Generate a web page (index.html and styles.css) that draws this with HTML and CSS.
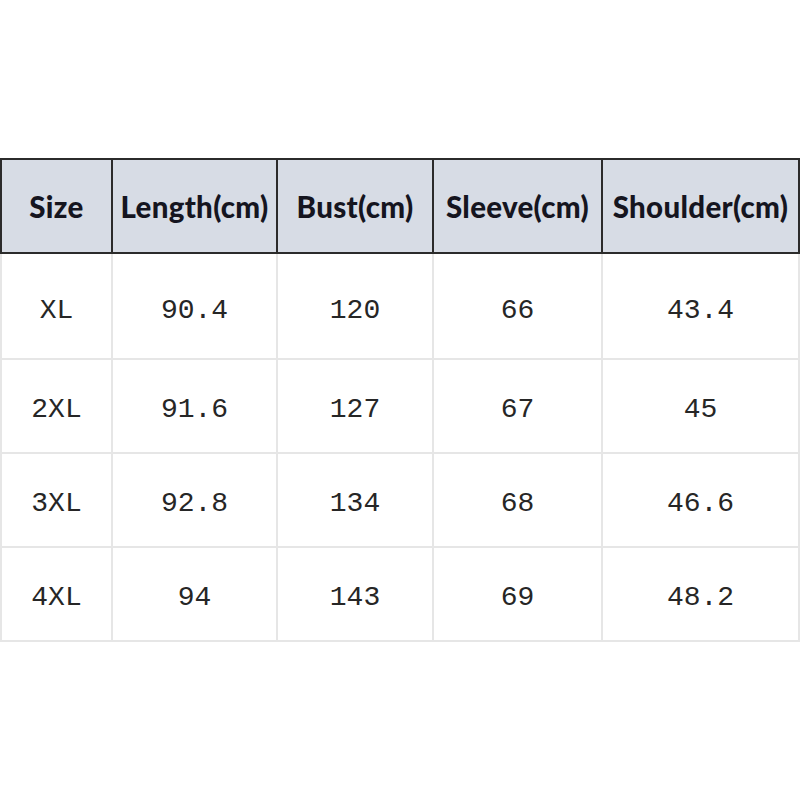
FILE: index.html
```html
<!DOCTYPE html>
<html>
<head>
<meta charset="utf-8">
<link rel="stylesheet" href="styles.css">
</head>
<body>
<table class="size-table">
  <colgroup>
    <col class="c1"><col class="c2"><col class="c3"><col class="c4"><col class="c5">
  </colgroup>
  <thead>
    <tr class="head-row">
      <th>Size</th><th>Length(cm)</th><th>Bust(cm)</th><th>Sleeve(cm)</th><th>Shoulder(cm)</th>
    </tr>
  </thead>
  <tbody>
    <tr class="row-first"><td>XL</td><td>90.4</td><td>120</td><td>66</td><td>43.4</td></tr>
    <tr class="row"><td>2XL</td><td>91.6</td><td>127</td><td>67</td><td>45</td></tr>
    <tr class="row"><td>3XL</td><td>92.8</td><td>134</td><td>68</td><td>46.6</td></tr>
    <tr class="row"><td>4XL</td><td>94</td><td>143</td><td>69</td><td>48.2</td></tr>
  </tbody>
</table>
</body>
</html>
```
FILE: styles.css
```css
html, body {
  margin: 0;
  padding: 0;
  background: #ffffff;
}
.size-table {
  margin-top: 158px;
  margin-left: 0;
  border-collapse: collapse;
  table-layout: fixed;
  width: 798px;
}
.c1 { width: 111px; }
.c2 { width: 165px; }
.c3 { width: 156px; }
.c4 { width: 169px; }
.c5 { width: 197px; }
.head-row { height: 94px; }
.head-row th {
  background: #d7dce5;
  border: 2px solid #2b2b2b;
  font-family: "Lato", "Open Sans", sans-serif;
  font-weight: 900;
  font-size: 29.5px;
  letter-spacing: 0.3px;
  color: #15151f;
  padding: 0;
  text-align: center;
  vertical-align: middle;
  white-space: nowrap;
}
.row-first { height: 106px; }
.row { height: 94px; }
td {
  border: 2px solid #e6e6e6;
  font-family: "Liberation Mono", monospace;
  font-size: 28px;
  color: #262626;
  text-align: center;
  vertical-align: middle;
  padding: 7px 0 0 0;
}
.row-first td {
  padding-top: 8px;
}
```
